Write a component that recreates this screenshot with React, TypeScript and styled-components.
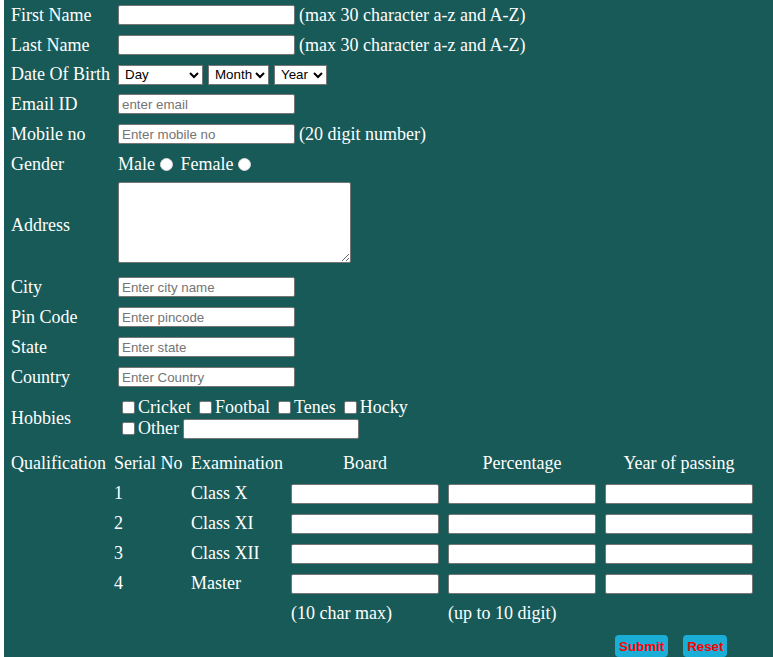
import React from "react";
import styled, { createGlobalStyle } from "styled-components";

const Global = createGlobalStyle`
  html, body { margin: 0; padding: 0; background: #ffffff; }
  body { font-family: "Liberation Serif", "Times New Roman", serif; overflow: hidden; }
`;

const Page = styled.div`
  margin-left: 4px;
  min-height: 100vh;
  background: #185a58;
  color: #ffffff;
  font-family: "Liberation Serif", "Times New Roman", serif;
  font-size: 18px;
  padding-left: 7px;
  box-sizing: border-box;
`;

const Row = styled.div<{ $h: number }>`
  display: flex;
  align-items: center;
  height: ${(p) => p.$h}px;
`;

const Label = styled.div`
  width: 107px;
  flex: none;
  white-space: nowrap;
`;

const Field = styled.div`
  display: flex;
  align-items: center;
  gap: 4px;
  white-space: nowrap;
`;

const AreaField = styled.div`
  align-self: flex-start;
  display: flex;
  padding-top: 3px;
`;

const TextInput = styled.input<{ $w?: number }>`
  width: ${(p) => p.$w ?? 177}px;
  height: 20px;
  box-sizing: border-box;
  border: 1px solid #767676;
  border-radius: 2px;
  padding: 1px 3px;
  background: #ffffff;
  font-family: "Liberation Sans", Arial, sans-serif;
  font-size: 13.33px;
  color: #000;
  outline: none;
  &::placeholder { color: #757575; }
`;

const Select = styled.select<{ $w: number }>`
  width: ${(p) => p.$w}px;
  height: 20px;
  box-sizing: border-box;
  border: 1px solid #767676;
  border-radius: 0;
  background: #ffffff;
  color: #000;
  font-family: "Liberation Sans", Arial, sans-serif;
  font-size: 13.33px;
  padding: 0 0 0 2px;
`;

const DateFields = styled.div`
  display: flex;
  align-items: center;
  gap: 5px;
`;

const Area = styled.textarea`
  width: 233px;
  height: 81px;
  box-sizing: border-box;
  border: 1px solid #767676;
  border-radius: 2px;
  background: #ffffff;
  margin: 0;
`;

const Radio = styled.input`
  appearance: none;
  width: 13px;
  height: 13px;
  margin: 0 3px 0 5px;
  border-radius: 50%;
  background: #ffffff;
  border: 1px solid #d8d8d8;
  box-sizing: border-box;
`;

const GenderField = styled.div`
  display: flex;
  align-items: center;
  white-space: pre;
`;

const Check = styled.input`
  appearance: none;
  width: 13px;
  height: 13px;
  margin: 0 3px 0 4px;
  border-radius: 2px;
  background: #ffffff;
  border: 1px solid #767676;
  box-sizing: border-box;
  flex: none;
`;

const HobbyLines = styled.div`
  display: flex;
  flex-direction: column;
`;

const HobbyLine = styled.div<{ $h: number }>`
  display: flex;
  align-items: center;
  height: ${(p) => p.$h}px;
`;

const HobbyItem = styled.label`
  display: inline-flex;
  align-items: center;
  margin-right: 4px;
  white-space: nowrap;
`;

const Qual = styled.div`
  display: grid;
  grid-template-columns: 103px 77px 100px 157px 157px 148px;
  grid-auto-rows: 30px;
  align-items: center;
  margin-top: 4px;
  white-space: nowrap;
`;

const HeadCell = styled.div<{ $center?: boolean }>`
  width: ${(p) => (p.$center ? "148px" : "auto")};
  text-align: ${(p) => (p.$center ? "center" : "left")};
`;

const Cell = styled.div<{ $col: number }>`
  grid-column: ${(p) => p.$col};
`;

const ButtonCell = styled.div`
  grid-column: 6;
  grid-row: 7;
  display: flex;
  align-self: start;
  gap: 15px;
  padding: 7px 0 0 10px;
`;

const Button = styled.button`
  height: 22px;
  padding: 0 4px;
  border: none;
  border-radius: 4px;
  background: #1aadd6;
  color: #ff0000;
  font-family: "Liberation Sans", Arial, sans-serif;
  font-weight: bold;
  font-size: 13.33px;
`;

const exams = [
  { n: "1", name: "Class X" },
  { n: "2", name: "Class XI" },
  { n: "3", name: "Class XII" },
  { n: "4", name: "Master" },
];

export default function App() {
  return (
    <>
      <Global />
      <Page>
        <Row $h={30}>
          <Label>First Name</Label>
          <Field>
            <TextInput />
            <span>(max 30 character a-z and A-Z)</span>
          </Field>
        </Row>
        <Row $h={30}>
          <Label>Last Name</Label>
          <Field>
            <TextInput />
            <span>(max 30 character a-z and A-Z)</span>
          </Field>
        </Row>
        <Row $h={29}>
          <Label>Date Of Birth</Label>
          <DateFields>
            <Select $w={85} defaultValue="Day">
              <option>Day</option>
            </Select>
            <Select $w={61} defaultValue="Month">
              <option>Month</option>
            </Select>
            <Select $w={53} defaultValue="Year">
              <option>Year</option>
            </Select>
          </DateFields>
        </Row>
        <Row $h={30}>
          <Label>Email ID</Label>
          <Field>
            <TextInput placeholder="enter email" />
          </Field>
        </Row>
        <Row $h={30}>
          <Label>Mobile no</Label>
          <Field>
            <TextInput placeholder="Enter mobile no" />
            <span>(20 digit number)</span>
          </Field>
        </Row>
        <Row $h={30}>
          <Label>Gender</Label>
          <GenderField>
            Male<Radio type="radio" name="g" /> Female<Radio type="radio" name="g" />
          </GenderField>
        </Row>
        <Row $h={93}>
          <Label>Address</Label>
          <AreaField>
            <Area />
          </AreaField>
        </Row>
        <Row $h={30}>
          <Label>City</Label>
          <Field>
            <TextInput placeholder="Enter city name" />
          </Field>
        </Row>
        <Row $h={30}>
          <Label>Pin Code</Label>
          <Field>
            <TextInput placeholder="Enter pincode" />
          </Field>
        </Row>
        <Row $h={30}>
          <Label>State</Label>
          <Field>
            <TextInput placeholder="Enter state" />
          </Field>
        </Row>
        <Row $h={30}>
          <Label>Country</Label>
          <Field>
            <TextInput placeholder="Enter Country" />
          </Field>
        </Row>
        <Row $h={52}>
          <Label>Hobbies</Label>
          <HobbyLines>
            <HobbyLine $h={21}>
              <HobbyItem>
                <Check type="checkbox" />
                Cricket
              </HobbyItem>
              <HobbyItem>
                <Check type="checkbox" />
                Footbal
              </HobbyItem>
              <HobbyItem>
                <Check type="checkbox" />
                Tenes
              </HobbyItem>
              <HobbyItem>
                <Check type="checkbox" />
                Hocky
              </HobbyItem>
            </HobbyLine>
            <HobbyLine $h={22}>
              <HobbyItem>
                <Check type="checkbox" />
                Other
              </HobbyItem>
              <TextInput $w={176} />
            </HobbyLine>
          </HobbyLines>
        </Row>
        <Qual>
          <HeadCell>Qualification</HeadCell>
          <HeadCell>Serial No</HeadCell>
          <HeadCell>Examination</HeadCell>
          <HeadCell $center>Board</HeadCell>
          <HeadCell $center>Percentage</HeadCell>
          <HeadCell $center>Year of passing</HeadCell>
          {exams.map((e) => (
            <React.Fragment key={e.n}>
              <Cell $col={2}>{e.n}</Cell>
              <Cell $col={3}>{e.name}</Cell>
              <Cell $col={4}>
                <TextInput $w={148} />
              </Cell>
              <Cell $col={5}>
                <TextInput $w={148} />
              </Cell>
              <Cell $col={6}>
                <TextInput $w={148} />
              </Cell>
            </React.Fragment>
          ))}
          <Cell $col={4}>(10 char max)</Cell>
          <Cell $col={5}>(up to 10 digit)</Cell>
          <ButtonCell>
            <Button type="submit">Submit</Button>
            <Button type="reset">Reset</Button>
          </ButtonCell>
        </Qual>
      </Page>
    </>
  );
}
